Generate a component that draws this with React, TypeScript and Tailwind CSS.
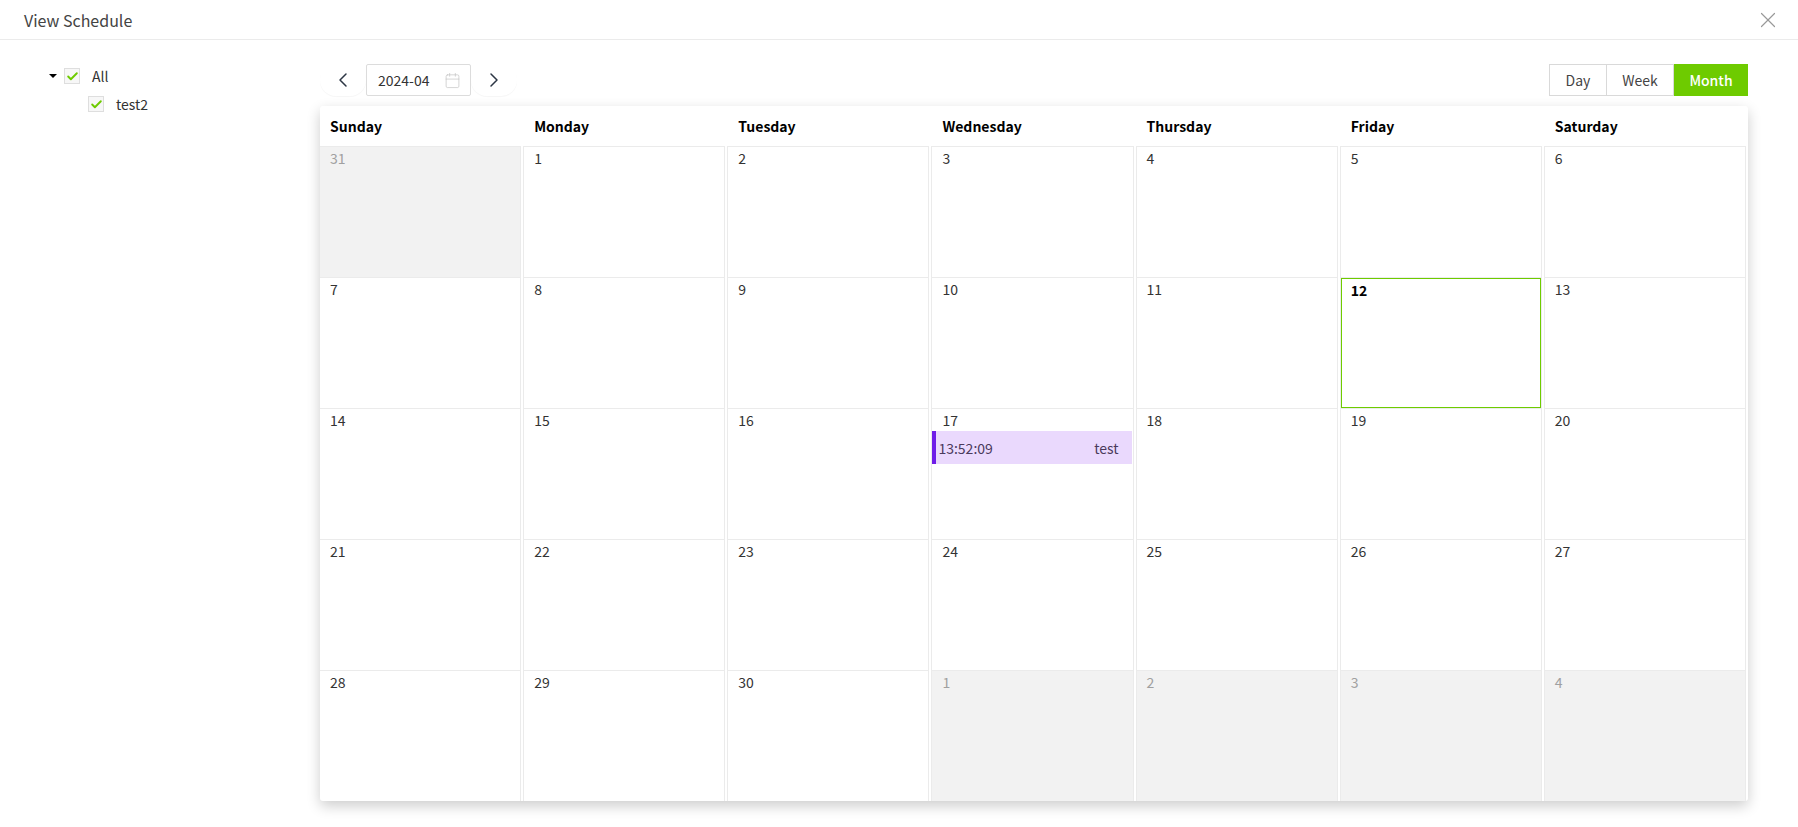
import { X, ChevronLeft, ChevronRight, Check, Calendar } from "lucide-react";

const WEEK_DAYS = ["Sunday", "Monday", "Tuesday", "Wednesday", "Thursday", "Friday", "Saturday"];

const DAYS = [
  { n: 31, off: true }, { n: 1 }, { n: 2 }, { n: 3 }, { n: 4 }, { n: 5 }, { n: 6 },
  { n: 7 }, { n: 8 }, { n: 9 }, { n: 10 }, { n: 11 }, { n: 12, today: true }, { n: 13 },
  { n: 14 }, { n: 15 }, { n: 16 }, { n: 17, event: true }, { n: 18 }, { n: 19 }, { n: 20 },
  { n: 21 }, { n: 22 }, { n: 23 }, { n: 24 }, { n: 25 }, { n: 26 }, { n: 27 },
  { n: 28 }, { n: 29 }, { n: 30 }, { n: 1, off: true }, { n: 2, off: true }, { n: 3, off: true }, { n: 4, off: true },
] as { n: number; off?: boolean; today?: boolean; event?: boolean }[];

function TreeCheck() {
  return (
    <span className="flex h-4 w-4 shrink-0 items-center justify-center border border-[#dedede] bg-[#f7f7f7]">
      <Check size={13} strokeWidth={3.5} className="text-[#6ecb00]" />
    </span>
  );
}

function DayCell({ day }: { day: (typeof DAYS)[number] }) {
  return (
    <div className="mr-[2px] h-[131px] border-x border-t border-[#ebebeb]">
      {day.today ? (
        <div className="h-full border border-[#6ecb00] pl-[9px] text-sm font-bold leading-[22px] text-black">
          {day.n}
        </div>
      ) : (
        <div
          className={
            day.off
              ? "h-full bg-[#f2f2f2] pl-[10px] text-sm leading-[22px] text-[#a0a0a0]"
              : "h-full pl-[10px] text-sm leading-[22px] text-[#333]"
          }
        >
          {day.n}
          {day.event && (
            <div className="ml-[-10px] mr-px flex h-[33px] items-center justify-between border-l-4 border-[#6f1de8] bg-[#ead9fd] pl-[2px] pr-[13px] text-[#4a3a5c]">
              <span>13:52:09</span>
              <span>test</span>
            </div>
          )}
        </div>
      )}
    </div>
  );
}

export default function App() {
  return (
    <div className="h-[827px] w-full overflow-hidden bg-white font-['Noto_Sans_CJK_SC',sans-serif] text-sm text-[#333]">
      <div className="flex h-10 items-center justify-between border-b border-[#ebebeb] pl-6 pr-[17px]">
        <span className="text-base text-[#444]">View Schedule</span>
        <X size={26} strokeWidth={1.1} className="text-[#999]" />
      </div>

      <div className="flex pr-[50px] pt-6">
        <div className="w-[320px] shrink-0 pl-[49px] pt-[4px]">
          <div className="flex h-4 items-center">
            <span className="h-0 w-0 border-x-[4px] border-t-[4px] border-x-transparent border-t-black" />
            <span className="ml-[7px]"><TreeCheck /></span>
            <span className="ml-3">All</span>
          </div>
          <div className="mt-3 flex h-4 items-center pl-[39px]">
            <TreeCheck />
            <span className="ml-3">test2</span>
          </div>
        </div>

        <div className="min-w-0 flex-1">
          <div className="flex h-8 items-center justify-between">
            <div className="flex items-center">
              <button className="flex h-8 w-[46px] items-center justify-center rounded-full shadow-[0_1px_1px_rgba(0,0,0,0.04)]">
                <ChevronLeft size={24} strokeWidth={1.5} className="text-[#2c3644]" />
              </button>
              <div className="flex h-8 w-[105px] items-center justify-between rounded-[2px] border border-[#dcdcdc] pl-[11px] pr-[9px] text-[#333]">
                <span>2024-04</span>
                <Calendar size={17} strokeWidth={1} className="text-[#c4c4c4]" />
              </div>
              <button className="flex h-8 w-[46px] items-center justify-center rounded-full shadow-[0_1px_1px_rgba(0,0,0,0.04)]">
                <ChevronRight size={24} strokeWidth={1.5} className="text-[#2c3644]" />
              </button>
            </div>
            <div className="flex h-8">
              <button className="w-[58px] border border-[#d9d9d9] text-[#444]">Day</button>
              <button className="w-[67px] border-y border-r border-[#d9d9d9] text-[#444]">Week</button>
              <button className="w-[74px] bg-[#6ecb00] font-medium text-white">Month</button>
            </div>
          </div>

          <div className="mt-[10px] overflow-hidden rounded-[3px] bg-white shadow-[0_5px_14px_rgba(0,0,0,0.2)]">
            <div className="-ml-px grid h-10 w-[1429px] grid-cols-7 items-center">
              {WEEK_DAYS.map((d) => (
                <div key={d} className="pl-[11px] font-bold text-black">{d}</div>
              ))}
            </div>
            <div className="-ml-px grid w-[1429px] grid-cols-7">
              {DAYS.map((day, i) => (
                <DayCell key={i} day={day} />
              ))}
            </div>
          </div>
        </div>
      </div>
    </div>
  );
}
